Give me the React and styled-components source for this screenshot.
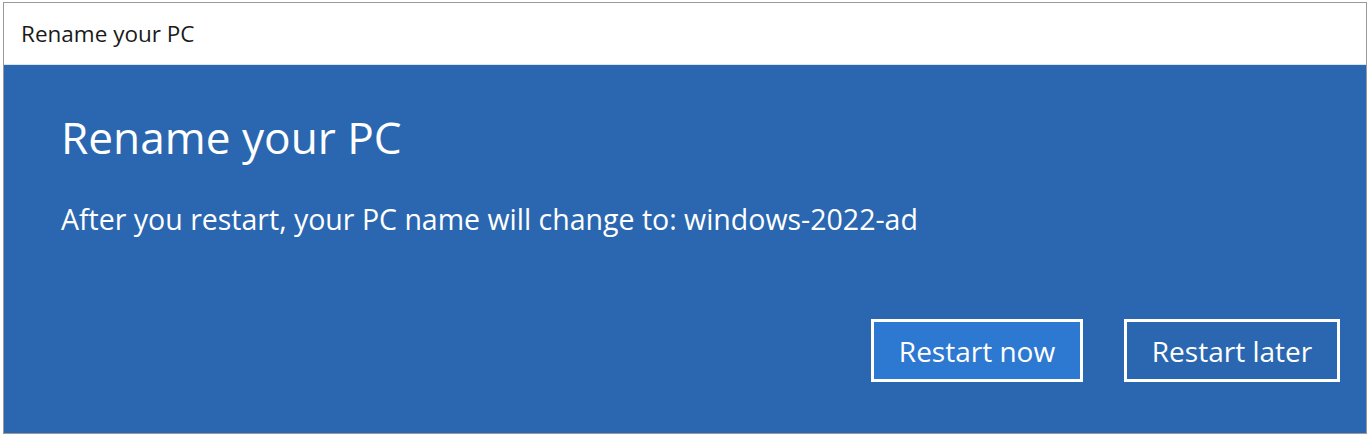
import React from "react";
import styled, { createGlobalStyle } from "styled-components";

const Global = createGlobalStyle`
  html, body {
    margin: 0;
    padding: 0;
    background: #ffffff;
  }
  body {
    font-family: "Open Sans", "Noto Sans", sans-serif;
  }
`;

const Window = styled.div`
  box-sizing: border-box;
  margin: 2px 0 0 3px;
  width: 1364px;
  height: 432px;
  border: 1px solid #9a9a9a;
  display: flex;
  flex-direction: column;
  background: #ffffff;
`;

const TitleBar = styled.div`
  height: 61px;
  display: flex;
  align-items: center;
  padding-left: 17px;
  font-size: 22.5px;
  color: #1a1a1a;
  border-bottom: 1px solid #d8e4f2;
`;

const Panel = styled.div`
  flex: 1;
  background: #2a67b0;
  color: #ffffff;
  display: flex;
  flex-direction: column;
  padding: 47px 26px 51px 57px;
`;

const Heading = styled.h1`
  margin: 0;
  font-weight: 400;
  font-size: 44.2px;
  line-height: 50px;
`;

const Message = styled.p`
  margin: 40px 0 0;
  font-size: 28.5px;
  line-height: 34px;
`;

const Actions = styled.div`
  margin-top: auto;
  display: flex;
  justify-content: flex-end;
  gap: 41px;
`;

const Button = styled.button`
  box-sizing: border-box;
  width: ${(p) => p.$width}px;
  height: 63px;
  border: 3px solid #ffffff;
  background: ${(p) => (p.$primary ? "#2d78d1" : "#2a67b0")};
  color: #ffffff;
  font-family: inherit;
  font-size: 28px;
  padding: 0;
  cursor: pointer;
`;

export default function App() {
  return (
    <>
      <Global />
      <Window>
        <TitleBar>Rename your PC</TitleBar>
        <Panel>
          <Heading>Rename your PC</Heading>
          <Message>After you restart, your PC name will change to: windows-2022-ad</Message>
          <Actions>
            <Button $primary $width={212}>Restart now</Button>
            <Button $width={216}>Restart later</Button>
          </Actions>
        </Panel>
      </Window>
    </>
  );
}
